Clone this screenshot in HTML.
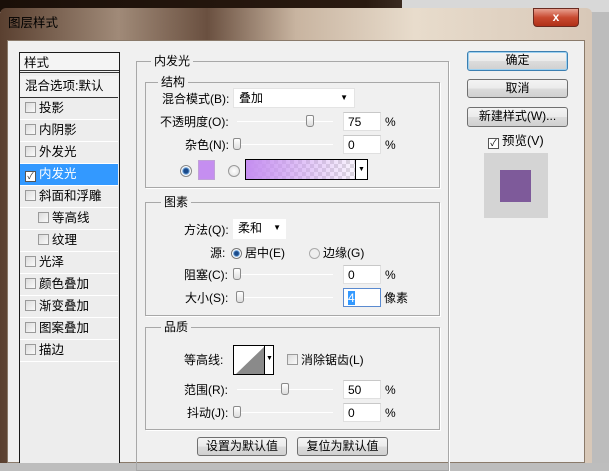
<!DOCTYPE html><html><head><meta charset="utf-8"><style>
*{margin:0;padding:0;box-sizing:border-box}
body{width:609px;height:463px;overflow:hidden;position:relative;background:#bdbdbd;font-family:"Liberation Sans","Noto Sans CJK SC",sans-serif;font-size:12px;color:#000}
.a{position:absolute}
.t{position:absolute;white-space:nowrap;line-height:14px}
.grp{position:absolute;border:1px solid #a8a8a8;box-shadow:1px 1px 0 #fff}
.lbl{position:absolute;background:#f0f0f0;padding:0 3px;line-height:14px}
.inp{position:absolute;background:#fff;border:1px solid #e0e0e0;border-top-color:#c8c8c8;height:19px;padding:2px 4px;line-height:14px}
.sl{position:absolute;height:1px;background:#ccc;border-bottom:1px solid #fff}
.th{position:absolute;width:8px;height:12px;border:1px solid #8a8a8a;border-radius:2px 2px 3px 3px;background:linear-gradient(#fff,#ddd)}
.btn{position:absolute;border:1px solid #707070;border-radius:3px;background:linear-gradient(#f4f4f4 0,#ebebeb 50%,#dcdcdc 51%,#d0d0d0);text-align:center;line-height:16px}
.cb{display:inline-block;width:11px;height:11px;border:1px solid #9a9a9a;background:linear-gradient(135deg,#dcdcdc,#fafafa);vertical-align:-1px;margin-right:3px}
.it{position:absolute;left:20px;width:98px;height:22px;line-height:20px;padding-left:5px;border-bottom:1px solid #fff;font-size:12.5px}
</style></head><body>
<div class="a" style="left:0;top:0;width:609px;height:12px;background:linear-gradient(90deg,#1a0f08,#2a1a10 60%,#3a2a20 66%,#d8d8d8 66%)"></div>
<div class="a" style="left:0;top:8px;width:592px;height:455px;background:linear-gradient(90deg,#5a4030,#a08a78 20%,#6a5040 35%,#c8b4a0 50%,#e8dccc 70%,#d8c8b8 100%);border-radius:6px 6px 0 0"></div>
<div class="a" style="left:592px;top:12px;width:17px;height:451px;background:#bcbcbc"></div>
<div class="t" style="left:8px;top:16px;font-size:12.5px">图层样式</div>
<div class="a" style="left:533px;top:8px;width:46px;height:19px;border-radius:0 0 4px 4px;background:linear-gradient(#e8a090,#c84a30 50%,#b03018);border:1px solid #6a2a20;color:#fff;text-align:center;font-weight:bold;line-height:17px">x</div>
<div class="a" style="left:7px;top:40px;width:578px;height:423px;background:#f0f0f0;border:1px solid #8a7a6a"></div>
<!-- list -->
<div class="a" style="left:19px;top:52px;width:101px;height:411px;border:1px solid #1a1a1a;border-bottom:none;background:#ededed"></div>
<div class="a" style="left:20px;top:53px;width:99px;height:20px;background:#f4f4f4;border-bottom:3px double #333"></div>
<div class="t" style="left:24px;top:56px;font-size:12.5px">样式</div>
<div class="it" style="top:76px;border-bottom:1px solid #333;background:#f2f2f2">混合选项:默认</div>
<div class="it" style="top:98px"><span class="cb"></span>投影</div>
<div class="it" style="top:120px"><span class="cb"></span>内阴影</div>
<div class="it" style="top:142px"><span class="cb"></span>外发光</div>
<div class="it" style="top:164px;background:#3399ff;color:#fff"><span class="cb" style="background:#fff;border-color:#555;font-size:9px;color:#333;line-height:9px;text-align:center">✓</span>内发光</div>
<div class="it" style="top:186px"><span class="cb"></span>斜面和浮雕</div>
<div class="it" style="top:208px;padding-left:18px"><span class="cb"></span>等高线</div>
<div class="it" style="top:230px;padding-left:18px"><span class="cb"></span>纹理</div>
<div class="it" style="top:252px"><span class="cb"></span>光泽</div>
<div class="it" style="top:274px"><span class="cb"></span>颜色叠加</div>
<div class="it" style="top:296px"><span class="cb"></span>渐变叠加</div>
<div class="it" style="top:318px"><span class="cb"></span>图案叠加</div>
<div class="it" style="top:340px"><span class="cb"></span>描边</div>
<!-- groups -->
<div class="grp" style="left:136px;top:61px;width:313px;height:410px"></div>
<div class="lbl" style="left:151px;top:54px">内发光</div>
<div class="grp" style="left:145px;top:82px;width:295px;height:106px"></div>
<div class="lbl" style="left:158px;top:75px">结构</div>
<div class="t" style="left:162px;top:92px">混合模式(B):</div>
<div class="a" style="left:233px;top:88px;width:122px;height:20px;background:#fff;border:1px solid #e4e4e4;padding:2px 5px;line-height:15px">叠加<span style="position:absolute;right:6px;top:1px;font-size:8px">▼</span></div>
<div class="t" style="left:160px;top:115px">不透明度(O):</div>
<div class="sl" style="left:237px;top:121px;width:96px"></div><div class="th" style="left:306px;top:115px"></div>
<div class="inp" style="left:343px;top:112px;width:38px">75</div><div class="t" style="left:385px;top:115px">%</div>
<div class="t" style="left:185px;top:138px">杂色(N):</div>
<div class="sl" style="left:237px;top:144px;width:96px"></div><div class="th" style="left:233px;top:138px"></div>
<div class="inp" style="left:343px;top:135px;width:38px">0</div><div class="t" style="left:385px;top:138px">%</div>
<div class="a" style="left:180px;top:165px;width:12px;height:12px;border-radius:50%;border:1px solid #888;background:radial-gradient(#1a4a8a 30%,#6aa0d8 45%,#fff 60%)"></div>
<div class="a" style="left:198px;top:160px;width:17px;height:20px;background:#c58ef0;border:1px solid #c0a0d8"></div>
<div class="a" style="left:228px;top:165px;width:12px;height:12px;border-radius:50%;border:1px solid #999;background:radial-gradient(#fff,#ddd)"></div>
<div class="a" style="left:245px;top:159px;width:123px;height:21px;border:1px solid #000;background:linear-gradient(90deg,#c58ef0,rgba(197,142,240,0)),repeating-conic-gradient(#ddd 0 25%,#fff 0 50%) 0 0/8px 8px"></div>
<div class="a" style="left:355px;top:159px;width:13px;height:21px;border:1px solid #000;background:#fff;font-size:7px;text-align:center;line-height:19px">▼</div>
<!-- 图素 -->
<div class="grp" style="left:145px;top:202px;width:295px;height:114px"></div>
<div class="lbl" style="left:161px;top:195px">图素</div>
<div class="t" style="left:184px;top:223px">方法(Q):</div>
<div class="a" style="left:233px;top:219px;width:53px;height:20px;background:#fff;padding:2px 5px;line-height:15px">柔和<span style="position:absolute;right:5px;top:1px;font-size:8px">▼</span></div>
<div class="t" style="left:210px;top:246px">源:</div>
<div class="a" style="left:231px;top:248px;width:11px;height:11px;border-radius:50%;border:1px solid #777;background:radial-gradient(#1a4a8a 30%,#6aa0d8 45%,#fff 60%)"></div>
<div class="t" style="left:245px;top:246px">居中(E)</div>
<div class="a" style="left:309px;top:248px;width:11px;height:11px;border-radius:50%;border:1px solid #aaa;background:#eee"></div>
<div class="t" style="left:323px;top:246px">边缘(G)</div>
<div class="t" style="left:184px;top:268px">阻塞(C):</div>
<div class="sl" style="left:237px;top:274px;width:96px"></div><div class="th" style="left:233px;top:268px"></div>
<div class="inp" style="left:343px;top:265px;width:38px">0</div><div class="t" style="left:385px;top:268px">%</div>
<div class="t" style="left:185px;top:291px">大小(S):</div>
<div class="sl" style="left:237px;top:297px;width:96px"></div><div class="th" style="left:236px;top:291px"></div>
<div class="inp" style="left:343px;top:288px;width:38px;border-color:#5a8ad0"><span style="background:#3399ff;color:#fff">4</span></div><div class="t" style="left:384px;top:291px">像素</div>
<!-- 品质 -->
<div class="grp" style="left:145px;top:327px;width:295px;height:103px"></div>
<div class="lbl" style="left:161px;top:320px">品质</div>
<div class="t" style="left:184px;top:353px">等高线:</div>
<div class="a" style="left:233px;top:345px;width:41px;height:30px;border:1px solid #000;background:#fff;overflow:hidden">
<svg width="41" height="30" style="position:absolute;left:0;top:0"><polygon points="2,28 30,1 30,28" fill="#8a8a8a"/></svg>
<div class="a" style="left:30px;top:0;width:10px;height:28px;background:#fff;border-left:1px solid #000;font-size:7px;text-align:center;line-height:26px">▼</div></div>
<div class="t" style="left:287px;top:353px"><span class="cb"></span>消除锯齿(L)</div>
<div class="t" style="left:184px;top:383px">范围(R):</div>
<div class="sl" style="left:237px;top:389px;width:96px"></div><div class="th" style="left:281px;top:383px"></div>
<div class="inp" style="left:343px;top:380px;width:38px">50</div><div class="t" style="left:385px;top:383px">%</div>
<div class="t" style="left:187px;top:406px">抖动(J):</div>
<div class="sl" style="left:237px;top:412px;width:96px"></div><div class="th" style="left:233px;top:406px"></div>
<div class="inp" style="left:343px;top:403px;width:38px">0</div><div class="t" style="left:385px;top:406px">%</div>
<div class="btn" style="left:197px;top:437px;width:90px;height:19px">设置为默认值</div>
<div class="btn" style="left:297px;top:437px;width:91px;height:19px">复位为默认值</div>
<!-- right -->
<div class="btn" style="left:467px;top:51px;width:101px;height:20px;border-color:#3c7fb1;box-shadow:0 0 0 1px #9cd0f0 inset">确定</div>
<div class="btn" style="left:467px;top:79px;width:101px;height:19px">取消</div>
<div class="btn" style="left:467px;top:107px;width:101px;height:20px">新建样式(W)...</div>
<div class="t" style="left:488px;top:134px;font-size:12.5px"><span class="cb" style="background:#fff;border-color:#555;font-size:9px;line-height:9px;text-align:center">✓</span>预览(V)</div>
<div class="a" style="left:484px;top:153px;width:64px;height:65px;background:#d4d4d4"></div>
<div class="a" style="left:500px;top:170px;width:31px;height:32px;background:#7e5a9a"></div>
</body></html>
